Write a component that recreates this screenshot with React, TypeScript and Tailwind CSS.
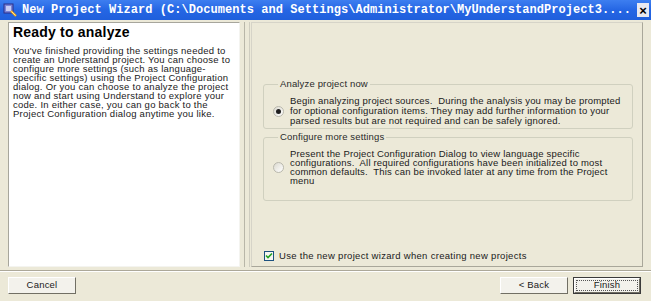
import React from 'react';

const leftLines = [
  "You've finished providing the settings needed to",
  'create an Understand project. You can choose to',
  'configure more settings (such as language-',
  'specific settings) using the Project Configuration',
  'dialog. Or you can choose to analyze the project',
  'now and start using Understand to explore your',
  'code. In either case, you can go back to the',
  'Project Configuration dialog anytime you like.',
];

const analyzeLines = [
  'Begin analyzing project sources.  During the analysis you may be prompted',
  'for optional configuration items. They may add further information to your',
  'parsed results but are not required and can be safely ignored.',
];

const configureLines = [
  'Present the Project Configuration Dialog to view language specific',
  'configurations.  All required configurations have been initialized to most',
  'common defaults.  This can be invoked later at any time from the Project',
  'menu',
];

const Radio: React.FC<{ checked?: boolean }> = ({ checked }) => (
  <div className="w-[11px] h-[11px] shrink-0 rounded-full border border-[#b9b8ad] bg-gradient-to-br from-[#dcdad0] to-white flex items-center justify-center">
    {checked && <div className="w-[5px] h-[5px] rounded-full bg-[#1f1f1f]" />}
  </div>
);

const Group: React.FC<{ title: string; lines: string[]; checked?: boolean; className: string; leading: string }> = ({
  title,
  lines,
  checked,
  className,
  leading,
}) => (
  <fieldset className={`border border-[#d0d0bf] rounded-[3px] px-[9px] ${className}`}>
    <legend className="px-[2px] ml-[5px] text-[9.5px] leading-[10px] tracking-[0.15px] text-[#2a2a2a]">{title}</legend>
    <div className="flex items-center gap-[6px]">
      <Radio checked={checked} />
      <div className={`text-[9.5px] tracking-[0.18px] text-[#1a1a1a] ${leading}`}>
        {lines.map((l, i) => (
          <div key={i} className="whitespace-pre">{l}</div>
        ))}
      </div>
    </div>
  </fieldset>
);

const Button: React.FC<{ label: string; focused?: boolean; className?: string }> = ({ label, focused, className }) => (
  <div className={`h-[17px] w-[68px] ${focused ? 'border border-[#3b3b3b]' : ''} ${className ?? ''}`}>
    <div className="h-full w-full border border-t-white border-l-white border-r-[#716f64] border-b-[#716f64] bg-[#f3f2ec] flex items-center justify-center p-[1px]">
      <div className={`h-full w-full flex items-center justify-center text-[9.5px] tracking-[0.2px] text-[#1a1a1a] ${focused ? 'border border-dotted border-[#555]' : ''}`}>
        {label}
      </div>
    </div>
  </div>
);

export default function App() {
  return (
    <div className="w-[651px] h-[301px] bg-[#ece9d8] flex flex-col overflow-hidden" style={{ fontFamily: '"Liberation Sans", Arial, sans-serif' }}>
      {/* title bar */}
      <div className="h-[20px] shrink-0 bg-gradient-to-b from-[#3d7ef0] via-[#2566e4] to-[#1f5fdc] flex items-center pl-[3px] pr-[2px]">
        <svg width="15" height="15" viewBox="0 0 15 15" className="shrink-0">
          <rect x="1" y="1" width="9" height="9" fill="#7b84d8" stroke="#2a2f8a" strokeWidth="1" />
          <rect x="3" y="3" width="5" height="5" fill="#c9ccf4" />
          <path d="M8 8 L13 13" stroke="#f2a818" strokeWidth="2.2" />
          <path d="M8.5 8.5 L12.5 12.5" stroke="#fff2b0" strokeWidth="0.8" />
        </svg>
        <div className="ml-[4px] flex-1 text-white font-bold text-[12px] leading-none whitespace-pre tracking-[0.05px]" style={{ fontFamily: '"Liberation Mono", "Courier New", monospace' }}>
          New Project Wizard (C:\Documents and Settings\Administrator\MyUnderstandProject3....
        </div>
        <div className="w-[12px] h-[14px] bg-[#e8e8f0] flex items-center justify-center text-black font-bold text-[13px] leading-none">×</div>
      </div>

      {/* main area */}
      <div className="flex mt-[2px] h-[245px] pl-[8px]">
        <div className="w-[232px] h-full bg-white border border-[#a7a69c] border-r-[#f4f4f0] border-b-[#f4f4f0] pl-[4px] pt-[1px]">
          <div className="text-[14px] font-bold text-black leading-[17px] tracking-[0.2px]">Ready to analyze</div>
          <div className="mt-[5px] text-[9.5px] leading-[9px] tracking-[0.25px] text-[#1a1a1a]">
            {leftLines.map((l, i) => (
              <div key={i} className="whitespace-pre">{l}</div>
            ))}
          </div>
        </div>
        <div className="w-px h-full ml-[4px] bg-[#b8b6a8]" />
        <div className="w-px h-full ml-[4px] bg-[#cfcdc0]" />
        <div className="w-[392px] h-full ml-[1px] border border-[#a9a79a] border-t-[#d6d4c8] border-l-[#d6d4c8] flex flex-col pl-[11px] pr-[9px]">
          <Group title="Analyze project now" lines={analyzeLines} checked leading="leading-[10px]" className="mt-[56px] pb-[2px] pt-[7px]" />
          <Group title="Configure more settings" lines={configureLines} leading="leading-[9px]" className="mt-[3px] pb-[15px] pt-[7px]" />
          <div className="mt-auto mb-[3px] ml-[1px] flex items-center gap-[5px]">
            <div className="w-[10px] h-[10px] border border-[#1c5180] bg-[#f6f6f2] flex items-center justify-center">
              <svg width="8" height="8" viewBox="0 0 8 8">
                <path d="M1 3.5 L3 5.5 L7 1.5" stroke="#21a121" strokeWidth="1.6" fill="none" />
              </svg>
            </div>
            <span className="text-[9.5px] tracking-[0.3px] text-[#1a1a1a]">Use the new project wizard when creating new projects</span>
          </div>
        </div>
      </div>

      {/* separator */}
      <div className="mt-[3px] h-px bg-[#aca899]" />
      <div className="h-px bg-white" />

      {/* buttons */}
      <div className="flex items-center mt-[5px] px-[8px]">
        <Button label="Cancel" />
        <div className="flex-1" />
        <Button label="< Back" />
        <Button label="Finish" focused className="ml-[5px] mr-[2px]" />
      </div>
    </div>
  );
}
